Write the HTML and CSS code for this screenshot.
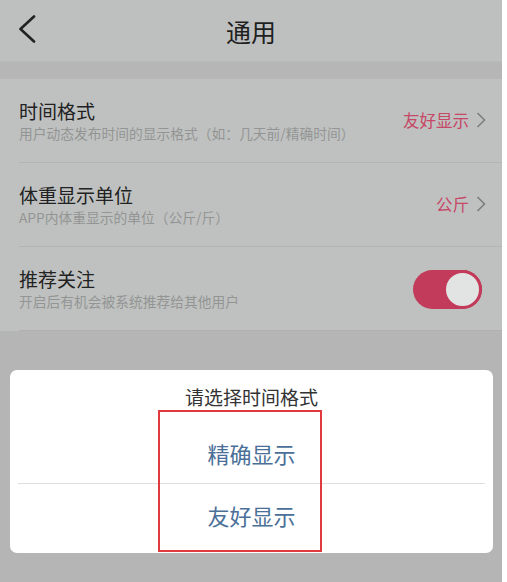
FILE: index.html
```html
<!DOCTYPE html>
<html lang="zh-CN">
<head>
<meta charset="utf-8">
<title>通用</title>
<link rel="stylesheet" href="styles.css">
</head>
<body>
<div class="screen">
  <header class="topbar">
    <span class="back">
      <svg width="18" height="28" viewBox="0 0 18 28"><path d="M16 1.5 L2.5 14 L16 26.5" fill="none" stroke="#222" stroke-width="2.6" stroke-linecap="round" stroke-linejoin="round"/></svg>
    </span>
    <h1 class="title">通用</h1>
    <span></span>
  </header>
  <div class="band"></div>
  <ul class="list">
    <li class="row">
      <div class="texts">
        <div class="row-title">时间格式</div>
        <div class="row-sub">用户动态发布时间的显示格式（如：几天前/精确时间）</div>
      </div>
      <div class="value">友好显示<svg class="chev" width="10" height="16" viewBox="0 0 10 16"><path d="M1.5 1 L8.5 8 L1.5 15" fill="none" stroke="#7b7c7c" stroke-width="1.5"/></svg></div>
    </li>
    <li class="row">
      <div class="texts">
        <div class="row-title">体重显示单位</div>
        <div class="row-sub">APP内体重显示的单位（公斤/斤）</div>
      </div>
      <div class="value">公斤<svg class="chev" width="10" height="16" viewBox="0 0 10 16"><path d="M1.5 1 L8.5 8 L1.5 15" fill="none" stroke="#7b7c7c" stroke-width="1.5"/></svg></div>
    </li>
    <li class="row">
      <div class="texts">
        <div class="row-title">推荐关注</div>
        <div class="row-sub">开启后有机会被系统推荐给其他用户</div>
      </div>
      <div class="toggle"><span class="knob"></span></div>
    </li>
  </ul>

  <div class="dialog">
    <div class="dialog-title">请选择时间格式</div>
    <div class="option first">精确显示</div>
    <div class="divider"></div>
    <div class="option last">友好显示</div>
    <div class="highlight"></div>
  </div>
</div>
</body>
</html>
```

FILE: styles.css
```css
html {
  background: #ffffff;
}
body {
  margin: 0;
  font-family: "Noto Sans CJK SC", "Noto Sans", sans-serif;
  text-spacing-trim: space-all;
}
.screen {
  position: relative;
  width: 502px;
  height: 582px;
  background: #b5b5b5;
  overflow: hidden;
}
.topbar {
  height: 61px;
  background: #bec0bf;
  display: grid;
  grid-template-columns: 60px 1fr 60px;
  align-items: center;
}
.back {
  display: flex;
  padding-left: 18px;
  padding-bottom: 3px;
}
.title {
  margin: 0;
  text-align: center;
  font-size: 25px;
  font-weight: 400;
  color: #1f1f1f;
  line-height: 30px;
}
.band {
  height: 18px;
  background: #b6b6b6;
  border-top: 1px solid #bababa;
  box-sizing: border-box;
}
.list {
  list-style: none;
  margin: 0;
  padding: 0 0 0 19px;
  background: #bfc1c0;
}
.row {
  height: 84px;
  box-sizing: border-box;
  border-bottom: 1px solid #b3b5b4;
  display: flex;
  align-items: center;
  justify-content: space-between;
  padding-right: 16px;
  padding-bottom: 2px;
}
.row:last-child {
  border-bottom-color: #b0b0b0;
}
.texts {
  display: flex;
  flex-direction: column;
}
.row-title {
  font-size: 19px;
  line-height: 27px;
  color: #222;
}
.row-sub {
  font-size: 13.75px;
  line-height: 19px;
  color: #939594;
}
.value {
  display: flex;
  align-items: center;
  gap: 7px;
  font-size: 16.5px;
  color: #c64766;
  margin-top: 0;
}
.chev {
  display: block;
}
.toggle {
  width: 69px;
  height: 39px;
  border-radius: 20px;
  background: #c33b5a;
  display: flex;
  justify-content: flex-end;
  margin-right: 4px;
  margin-top: 4px;
}
.knob {
  width: 39px;
  height: 39px;
  box-sizing: border-box;
  border-radius: 50%;
  border: 3px solid #c33b5a;
  background: #e2e3e3;
}
.dialog {
  position: absolute;
  left: 10px;
  top: 370px;
  width: 483px;
  height: 183px;
  background: #ffffff;
  border-radius: 7px;
  display: flex;
  flex-direction: column;
  align-items: stretch;
}
.dialog-title {
  height: 53px;
  line-height: 53px;
  text-align: center;
  font-size: 19px;
  color: #333;
}
.option {
  text-align: center;
  font-size: 22px;
  color: #4a6f98;
  display: flex;
  align-items: center;
  justify-content: center;
}
.option.first {
  height: 60px;
}
.option.last {
  height: 62px;
}
.divider {
  height: 1px;
  background: #dedede;
  margin: 0 8px;
}
.highlight {
  position: absolute;
  left: 148px;
  top: 40px;
  width: 164px;
  height: 142px;
  box-sizing: border-box;
  border: 2px solid #e03a3e;
}
```
